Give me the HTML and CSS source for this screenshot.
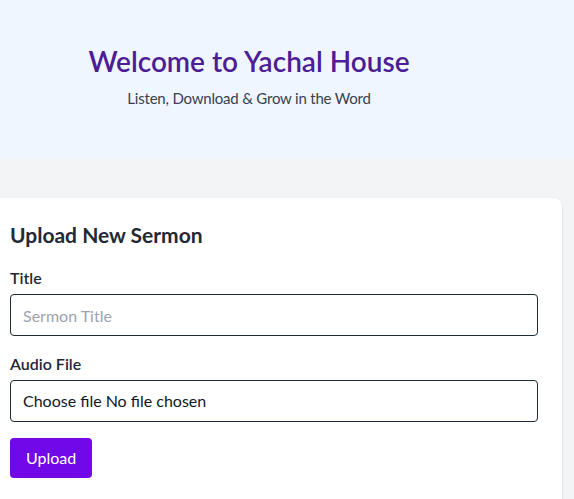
FILE: index.html
```html
<!DOCTYPE html>
<html lang="en">
<head>
<meta charset="utf-8">
<title>Yachal House</title>
<link rel="stylesheet" href="styles.css">
</head>
<body>
<header class="hero">
  <div class="hero-inner">
    <h1 class="hero-title">Welcome to Yachal House</h1>
    <p class="hero-sub">Listen, Download &amp; Grow in the Word</p>
  </div>
</header>
<main class="main">
  <section class="card">
    <h2 class="card-title">Upload New Sermon</h2>
    <form class="form">
      <div class="field">
        <label class="label" for="title">Title</label>
        <input class="input" id="title" type="text" placeholder="Sermon Title">
      </div>
      <div class="field">
        <span class="label">Audio File</span>
        <label class="input file" for="audio">
          <input class="file-native" id="audio" type="file" accept="audio/*">
          <span class="file-btn">Choose file</span>
          <span class="file-name">No file chosen</span>
        </label>
      </div>
      <button class="btn" type="button">Upload</button>
    </form>
  </section>
</main>
</body>
</html>
```

FILE: styles.css
```css
* { box-sizing: border-box; }
html, body { margin: 0; padding: 0; }
body {
  background: #f3f4f6;
  font-family: "Lato", "Noto Sans", "Liberation Sans", sans-serif;
  color: #1f2937;
  height: 499px;
  overflow: hidden;
}
.hero {
  background: #eff6ff;
  padding: 43px 76px 48px 0;
  text-align: center;
}
.hero-title {
  margin: 0;
  font-size: 28px;
  line-height: 36px;
  font-weight: 600;
  color: #4c1d95;
}
.hero-sub {
  margin: 7px 0 0;
  font-size: 15px;
  line-height: 24px;
  letter-spacing: -0.2px;
  color: #374151;
}
.main {
  padding-top: 40px;
  padding-right: 12px;
}
.card {
  background: #fff;
  margin-left: -14px;
  border-radius: 8px;
  box-shadow: 0 1px 3px rgba(0,0,0,0.1), 0 1px 2px rgba(0,0,0,0.06);
  padding: 23px 24px 24px;
  min-height: 320px;
}
.card-title {
  margin: 0 0 17px;
  font-size: 21px;
  line-height: 28px;
  font-weight: 700;
  color: #1f2937;
}
.form { display: flex; flex-direction: column; gap: 16px; align-items: flex-start; }
.field { display: flex; flex-direction: column; gap: 4px; width: 100%; }
.label {
  font-size: 16px;
  line-height: 24px;
  font-weight: 600;
  color: #1f2937;
}
.input {
  width: 100%;
  height: 42px;
  padding: 8px 12px;
  border: 1px solid #1f2937;
  border-radius: 4px;
  font: inherit;
  font-size: 16px;
  line-height: 24px;
  color: #111827;
  background: #fff;
}
.input::placeholder { color: #9ca3af; }
.file {
  display: flex;
  align-items: center;
  gap: 4px;
  cursor: pointer;
}
.file-native { display: none; }
.btn {
  background: #7008e7;
  color: #fff;
  border: 0;
  border-radius: 4px;
  padding: 8px 16px;
  font: inherit;
  font-size: 16px;
  line-height: 24px;
  height: 40px;
}
```
